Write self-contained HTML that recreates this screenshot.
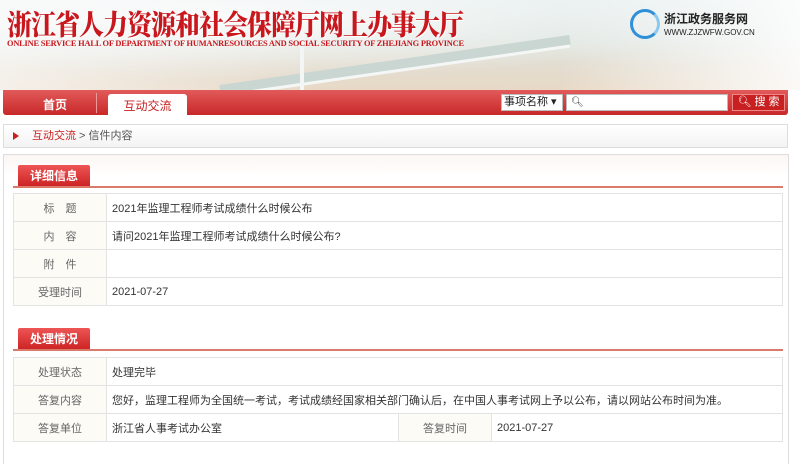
<!DOCTYPE html>
<html><head><meta charset="utf-8"><style>
*{margin:0;padding:0;box-sizing:border-box}
body{width:800px;height:457px;overflow:hidden;background:#fff;font-family:"Liberation Sans","Noto Sans CJK SC",sans-serif;font-size:12px;color:#333;position:relative}
.hdr{position:absolute;left:0;top:0;width:800px;height:90px;background:linear-gradient(180deg,#e6eeee 0%,#dfe6e2 45%,#e3dccf 75%,#e8d9c6 100%)}
.hdr .sky{position:absolute;left:0;top:0;width:800px;height:90px;background:radial-gradient(ellipse at 30% 20%,rgba(255,255,255,.8),rgba(255,255,255,0) 60%),linear-gradient(90deg,rgba(255,255,255,.6),rgba(255,255,255,0) 40%,rgba(255,255,255,0) 70%,rgba(255,255,255,.85))}
.bridge{position:absolute;left:140px;top:30px;width:500px;height:60px}
.title{position:absolute;left:7px;top:3px;font-family:"Noto Serif CJK SC",serif;font-weight:900;font-size:25px;color:#c9171e;letter-spacing:-1px;white-space:nowrap;text-shadow:1px 1px 0 #fff;transform:scaleY(1.12);transform-origin:0 0}
.sub{position:absolute;left:7px;top:39px;font-family:"Liberation Serif",serif;font-weight:bold;font-size:8.4px;color:#c9171e;white-space:nowrap;letter-spacing:-.2px}
.logo{position:absolute;left:630px;top:9px;width:30px;height:30px;border-radius:50%;border:3px solid #2f8fd8;border-right-color:#8cc8f0}
.lt1{position:absolute;left:664px;top:10px;font-weight:bold;font-size:12px;color:#222}
.lt2{position:absolute;left:664px;top:28px;font-size:8px;color:#222}
.nav{position:absolute;left:3px;top:90px;width:785px;height:25px;background:linear-gradient(#e25a5a,#c82828);border-radius:0 0 3px 3px}
.nav .home{position:absolute;left:40px;top:6px;color:#fff;font-weight:bold;font-size:12px}
.nav .sep{position:absolute;left:93px;top:3px;width:1px;height:20px;background:#e99}
.nav .act{position:absolute;left:105px;top:4px;width:79px;height:22px;background:#fff;border-radius:3px 3px 0 0;color:#c92020;font-size:12px;text-align:center;line-height:24px}
.sel{position:absolute;left:501px;top:94px;width:62px;height:17px;background:#fff;border:1px solid #bbb;font-size:11px;line-height:15px;padding-left:2px;color:#222}
.inp{position:absolute;left:566px;top:94px;width:162px;height:17px;background:#fff;border:1px solid #bbb;font-size:10px;padding-left:4px;line-height:15px}
.btn{position:absolute;left:732px;top:94px;width:53px;height:17px;background:#c82020;border:1px solid #e88;color:#fff;font-size:11px;line-height:15px;text-align:center}
.crumb{position:absolute;left:3px;top:124px;width:785px;height:24px;border:1px solid #ddd;background:linear-gradient(#fff,#f3f3f3);font-size:11px;line-height:22px;padding-left:28px;color:#555}
.crumb .tri{position:absolute;left:9px;top:7px;width:0;height:0;border-left:6px solid #c82020;border-top:4px solid transparent;border-bottom:4px solid transparent}
.crumb a{color:#c82020;text-decoration:none}
.box{position:absolute;left:3px;top:154px;width:786px;height:310px;border:1px solid #ddd;border-bottom:none;background:linear-gradient(#fbf6f3,#fff 20px)}
.tab{position:absolute;left:18px;width:72px;height:22px;background:linear-gradient(#e55,#c22);color:#fff;font-weight:bold;font-size:12px;text-align:center;line-height:22px;border-radius:2px 2px 0 0}
.line{position:absolute;left:13px;width:770px;height:2px;background:#d97a6a}
table{position:absolute;left:13px;width:770px;border-collapse:collapse}
td{border:1px solid #e3e3e3;height:28px;font-size:11px;padding-left:5px;color:#333;white-space:nowrap}
td.l{width:93px;background:#fcfbf6;text-align:center;padding:0;color:#666}
</style></head><body>
<div class="hdr"><div class="sky"></div>
<svg class="bridge" viewBox="0 0 500 60"><path d="M80 60 L430 10" stroke="#c9d6d2" stroke-width="10" fill="none"/><path d="M80 60 L430 10" stroke="#f5f7f6" stroke-width="3" fill="none" transform="translate(0,6)"/><rect x="160" y="0" width="4" height="60" fill="#f4f6f5"/></svg>
<div class="title">浙江省人力资源和社会保障厅网上办事大厅</div>
<div class="sub">ONLINE SERVICE HALL OF DEPARTMENT OF HUMANRESOURCES AND SOCIAL SECURITY OF ZHEJIANG PROVINCE</div>
<div class="logo"></div><div class="lt1">浙江政务服务网</div><div class="lt2">WWW.ZJZWFW.GOV.CN</div>
</div>
<div class="nav"><span class="home">首页</span><span class="sep"></span><span class="act">互动交流</span></div>
<div class="sel">事项名称 ▾</div><div class="inp">&#x1F50D;&#xFE0E;</div><div class="btn">🔍&#xFE0E; 搜 索</div>
<div class="crumb"><span class="tri"></span><a>互动交流</a> &gt; 信件内容</div>
<div class="box"></div>
<div class="tab" style="top:165px">详细信息</div><div class="line" style="top:186px"></div>
<table style="top:193px">
<tr><td class="l">标　题</td><td>2021年监理工程师考试成绩什么时候公布</td></tr>
<tr><td class="l">内　容</td><td>请问2021年监理工程师考试成绩什么时候公布?</td></tr>
<tr><td class="l">附　件</td><td></td></tr>
<tr><td class="l">受理时间</td><td>2021-07-27</td></tr>
</table>
<div class="tab" style="top:328px">处理情况</div><div class="line" style="top:349px"></div>
<table style="top:357px">
<tr><td class="l">处理状态</td><td colspan="3">处理完毕</td></tr>
<tr><td class="l">答复内容</td><td colspan="3">您好，监理工程师为全国统一考试，考试成绩经国家相关部门确认后，在中国人事考试网上予以公布，请以网站公布时间为准。</td></tr>
<tr><td class="l">答复单位</td><td style="width:292px">浙江省人事考试办公室</td><td class="l">答复时间</td><td>2021-07-27</td></tr>
</table>
</body></html>
